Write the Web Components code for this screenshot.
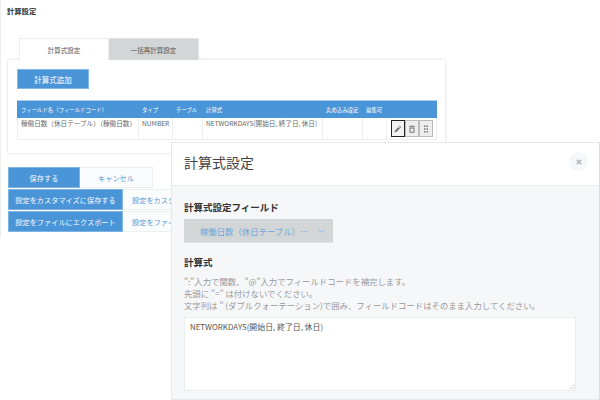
<!DOCTYPE html>
<html lang="ja">
<head>
<meta charset="utf-8">
<title>計算設定</title>
<style>
  html, body { margin: 0; height: 100%; background: #fff; }
  body { font-family: "Noto Sans CJK JP", "Noto Sans", sans-serif; color: #333; overflow: hidden; }
</style>
</head>
<body>
<calc-app></calc-app>
<script>
const BLUE = '#4a94d8'

window.customElements.define('calc-tabs', class CalcTabs extends HTMLElement {
  constructor() {
    super()
    this.attachShadow({ mode: 'open' })
    this.shadowRoot.innerHTML = `
      <style>
        :host { display: flex; margin-left: 11px; height: 22px; font-size: 6.5px; color: #555; }
        div { display: flex; align-items: center; justify-content: center; box-sizing: border-box; }
        .on { width: 90px; background: #fff; border: 1px solid #eee; border-bottom: 0; position: relative; z-index: 1; margin-bottom: -1px; height: 23px; }
        .off { width: 90px; background: #d3d6d6; border-top: 1px solid #e2e4e4; border-right: 1px solid #e2e4e4; }
      </style>
      <div class="on">計算式設定</div>
      <div class="off">一括再計算設定</div>`
  }
})

window.customElements.define('calc-table', class CalcTable extends HTMLElement {
  constructor() {
    super()
    this.attachShadow({ mode: 'open' })
    this.shadowRoot.innerHTML = `
      <style>
        :host { display: block; width: 420px; font-size: 6px; color: #666; }
        .row { display: grid; grid-template-columns: 121px 34px 30px 120px 40px 24px 51px; }
        .head { background: ${BLUE}; color: #fff; height: 18px; align-items: center; border-top: 1px solid #a9cbec; box-sizing: border-box; font-size: 5.4px; }
        .head span { padding-left: 4px; }
        .body { height: 22px; border: solid #eee; border-width: 0 1px 1px; box-sizing: border-box; }
        .body > span { padding: 0 0 0 3px; border-right: 1px solid #eee; font-size: 6.6px; white-space: nowrap; }
        .body > span:last-child { border-right: 0; padding: 2px 0 0 4px; }
        .acts { display: flex; }
        button { width: 14px; height: 17px; box-sizing: border-box; padding: 0; background: #eee; border: 1px solid #bbb; display: flex; align-items: center; justify-content: center; }
        button.focus { border: 1px solid #222; background: #f2f2f2; }
        svg { width: 8px; height: 8px; fill: #777; display: block; }
      </style>
      <div class="row head">
        <span>フィールド名（フィールドコード）</span><span>タイプ</span><span>テーブル</span><span>計算式</span><span>丸め込み設定</span><span>編集可</span><span></span>
      </div>
      <div class="row body">
        <span>稼働日数（休日テーブル）（稼働日数）</span><span>NUMBER</span><span></span><span>NETWORKDAYS(開始日, 終了日, 休日)</span><span></span><span></span>
        <span><div class="acts">
          <button class="focus" aria-label="編集"><svg viewBox="0 0 16 16"><path d="M11.5 1.5l3 3-1.6 1.6-3-3zM8.900 4.100l3 3L5 14l-3.800.800L2 11z"/></svg></button>
          <button aria-label="削除"><svg viewBox="0 0 16 16"><path d="M6 1h4l.6 1H14v1.500H2V2h3.400zM3 5h10v9.500a1 1 0 0 1-1 1H4a1 1 0 0 1-1-1zm2 2v6.500h6V7z"/></svg></button>
          <button aria-label="並び替え"><svg viewBox="0 0 16 16"><path d="M4 1h3v3H4zM9 1h3v3H9zM4 6.500h3v3H4zM9 6.500h3v3H9zM4 12h3v3H4zM9 12h3v3H9z"/></svg></button>
        </div></span>
      </div>`
  }
})

window.customElements.define('calc-panel', class CalcPanel extends HTMLElement {
  constructor() {
    super()
    this.attachShadow({ mode: 'open' })
    this.shadowRoot.innerHTML = `
      <style>
        :host { display: block; width: 437px; height: 93px; box-sizing: border-box; padding: 9px 9px 0; background: #fff; box-shadow: 0 0 3px rgba(0,0,0,.16); }
        .add { width: 72px; height: 20px; display: flex; align-items: center; justify-content: center; background: ${BLUE}; color: #fff; font-size: 7.500px; border: 1px solid #86b8e6; box-sizing: border-box; margin-bottom: 11px; }
      </style>
      <div class="add">計算式追加</div>
      <slot></slot>`
  }
})

window.customElements.define('calc-actions', class CalcActions extends HTMLElement {
  constructor() {
    super()
    this.attachShadow({ mode: 'open' })
    this.shadowRoot.innerHTML = `
      <style>
        :host { display: block; font-size: 7.200px; }
        .row { display: flex; margin-bottom: 1px; }
        .row div { display: flex; align-items: center; box-sizing: border-box; height: 21px; white-space: nowrap; flex: none; }
        .p { background: ${BLUE}; color: #f4f8fc; border: 1px solid #7fb3e3; justify-content: center; }
        .s { background: #fbfcfd; color: #5a9bd8; border: 1px solid #eef0f2; border-left: 0; }
        .row.top .p { width: 72px; }
        .row.top .s { width: 73px; justify-content: center; }
        .row .p.wide { width: 115px; }
        /* the modal covers the rest of these two buttons */
        .row .s.wide { width: 60px; padding-left: 9px; }
      </style>
      <div class="row top"><div class="p">保存する</div><div class="s">キャンセル</div></div>
      <div class="row"><div class="p wide">設定をカスタマイズに保存する</div><div class="s wide">設定をカスタ</div></div>
      <div class="row"><div class="p wide">設定をファイルにエクスポート</div><div class="s wide">設定をファイ</div></div>`
  }
})

window.customElements.define('calc-modal', class CalcModal extends HTMLElement {
  constructor() {
    super()
    this.attachShadow({ mode: 'open' })
    this.shadowRoot.innerHTML = `
      <style>
        :host { position: absolute; left: 171px; top: 142px; width: 429px; height: 258px; box-sizing: border-box; background: #f6f7f9; border: 1px solid #e6e8ea; border-right-color: #ddd; display: flex; flex-direction: column; z-index: 5; }
        header { height: 43px; flex: none; background: #fff; border-bottom: 1px solid #e9ecee; display: flex; align-items: center; justify-content: space-between; box-sizing: border-box; padding: 0 11px 5px 12px; font-size: 14px; color: #444; }
        .close { width: 19px; height: 19px; border-radius: 50%; background: #f6f7f9; display: flex; align-items: center; justify-content: center; }
        .close svg { width: 6px; height: 6px; stroke: #aaa; stroke-width: 1.6; fill: none; display: block; }
        main { padding: 15px 12px 0; flex: 1; display: flex; flex-direction: column; }
        h3 { margin: 0; font-size: 9.500px; line-height: 13px; color: #333; font-weight: 700; }
        .select { width: 149px; height: 24px; margin-top: 5px; background: #d3d6d7; color: #6fa5dc; border-bottom: 1px solid #dfe1e2; box-sizing: border-box; display: flex; align-items: center; justify-content: space-between; padding: 0 8px 0 16px; font-size: 8.400px; white-space: nowrap; }
        .select svg { width: 7px; height: 4px; stroke: #8fb6de; stroke-width: 1; fill: none; display: block; }
        h3.f { margin-top: 13px; }
        p { margin: 6px 0 6px; font-size: 8.400px; line-height: 12px; color: #999; white-space: nowrap; }
        .area { width: 392px; height: 74px; box-sizing: border-box; background: #fff; border: 1px solid #eceded; padding: 3px 5px; font-size: 7.900px; line-height: 11px; color: #555; position: relative; }
        .grip { position: absolute; right: 0; bottom: 0; width: 7px; height: 7px; }
        .grip svg { width: 7px; height: 7px; stroke: #aaa; stroke-width: 1; stroke-dasharray: 1 1; fill: none; display: block; }
      </style>
      <header>
        <span>計算式設定</span>
        <span class="close"><svg viewBox="0 0 8 8"><path d="M1 1l6 6M7 1L1 7"/></svg></span>
      </header>
      <main>
        <h3>計算式設定フィールド</h3>
        <div class="select"><span>稼働日数（休日テーブル）…</span><svg viewBox="0 0 7 4"><path d="M.5.5l3 3 3-3"/></svg></div>
        <h3 class="f">計算式</h3>
        <p>":"入力で関数、"@"入力でフィールドコードを補完します。<br>先頭に "=" は付けないでください。<br>文字列は " (ダブルクォーテーション)で囲み、フィールドコードはそのまま入力してください。</p>
        <div class="area">NETWORKDAYS(開始日, 終了日, 休日)<span class="grip"><svg viewBox="0 0 7 7"><path d="M6.500 1L1 6.500M6.500 4L4 6.500"/></svg></span></div>
      </main>`
  }
})

window.customElements.define('calc-app', class CalcApp extends HTMLElement {
  constructor() {
    super()
    this.attachShadow({ mode: 'open' })
    this.shadowRoot.innerHTML = `
      <style>
        :host { display: block; position: relative; width: 600px; height: 400px; box-sizing: border-box; padding: 6px 0 0 7px; overflow: hidden; }
        :host::before { content: ""; position: absolute; left: 0; top: 0; width: 1px; height: 238px; background: #eee; }
        h1 { margin: 0 0 22px; font-size: 7.300px; line-height: 10px; font-weight: 700; color: #333; }
        calc-tabs { margin-left: 12px; }
        calc-panel { margin-left: 1px; }
        calc-actions { margin: 14px 0 0 1px; }
      </style>
      <h1>計算設定</h1>
      <calc-tabs></calc-tabs>
      <calc-panel><calc-table></calc-table></calc-panel>
      <calc-actions></calc-actions>
      <calc-modal></calc-modal>`
  }
})
</script>
</body>
</html>
